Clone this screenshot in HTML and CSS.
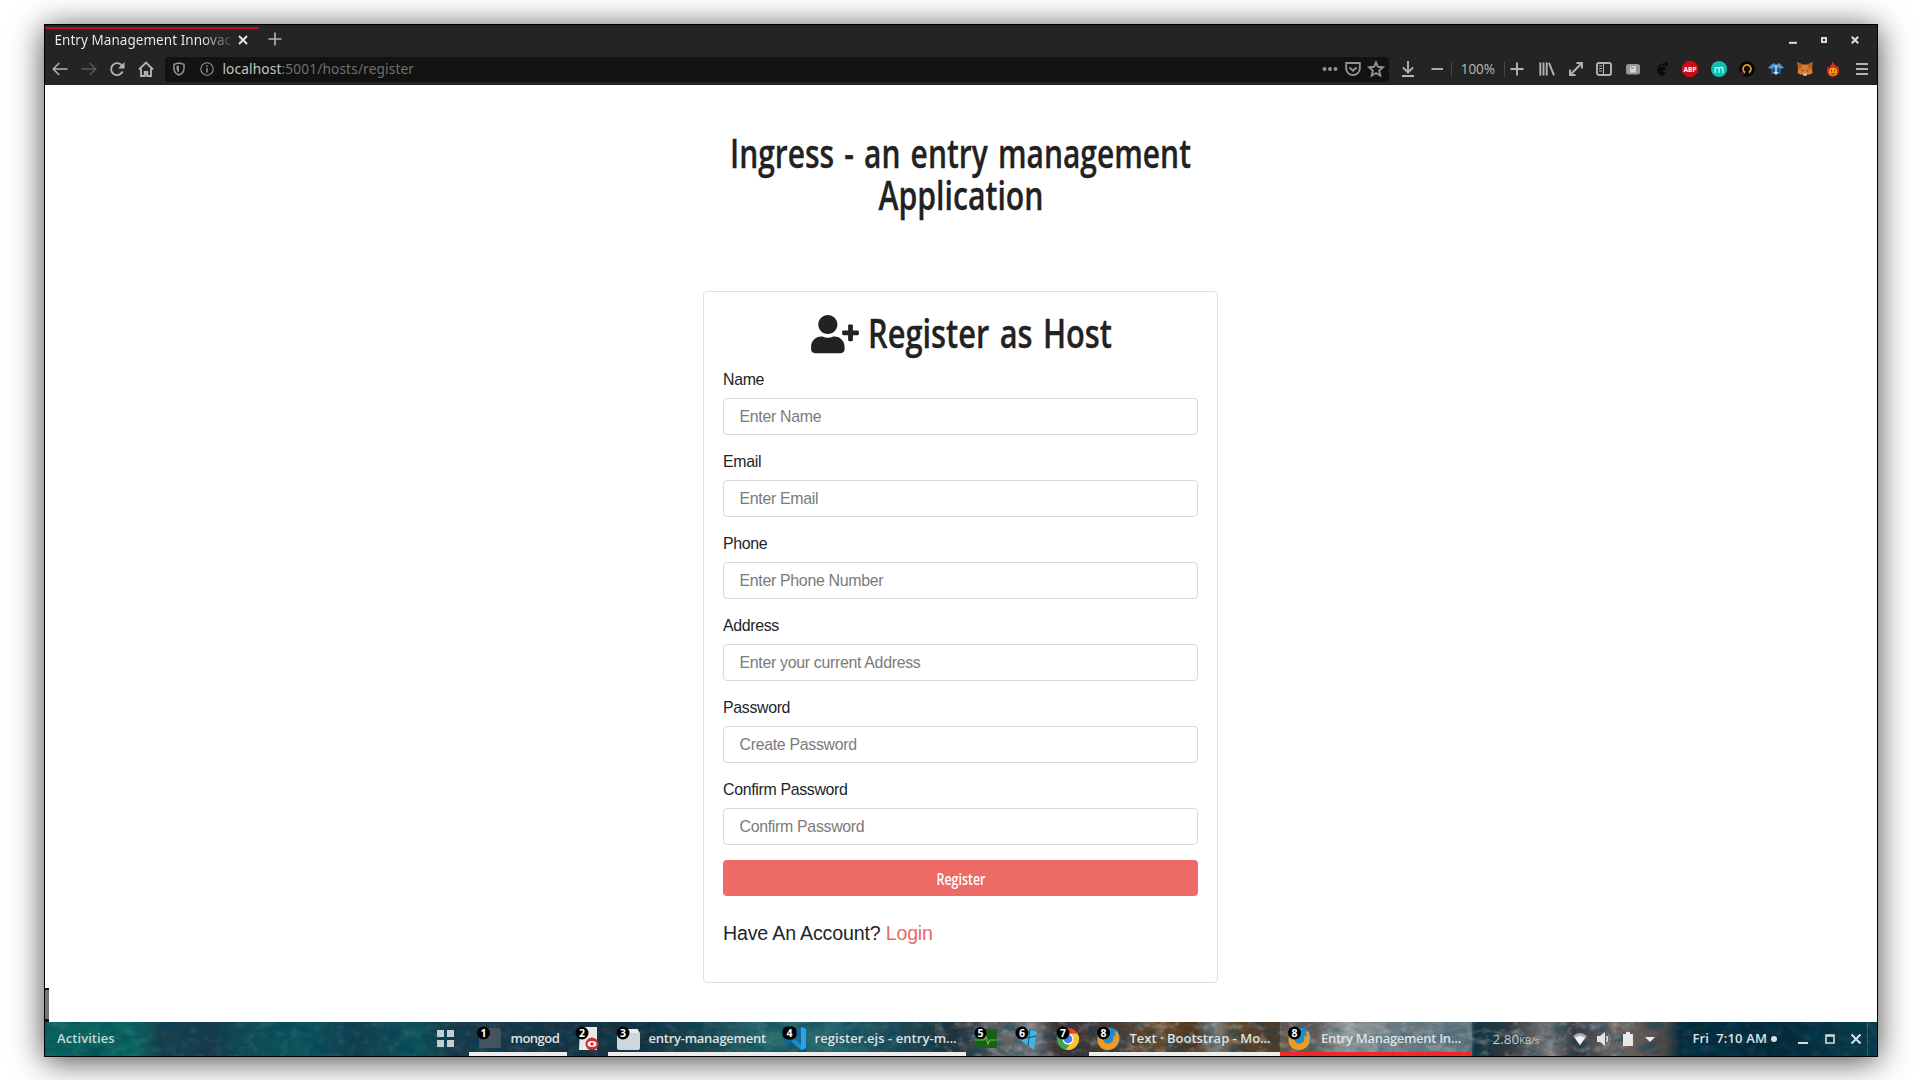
FILE: index.html
```html
<!DOCTYPE html>
<html lang="en">
<head>
<meta charset="utf-8">
<title>Entry Management Innovaccer</title>
<link rel="stylesheet" href="styles.css">
</head>
<body>
<div class="window">
  <header class="titlebar">
    <div class="tab">
      <span class="tab-title">Entry Management Innovac</span>
      <svg class="tab-close" width="10" height="10" viewBox="0 0 10 10"><path d="M1 1l8 8M9 1l-8 8" stroke="#eee" stroke-width="1.8"/></svg>
    </div>
    <svg class="new-tab" width="14" height="14" viewBox="0 0 14 14"><path d="M7 .5v13M.5 7h13" stroke="#b4b4b4" stroke-width="1.6"/></svg>
    <div class="window-controls">
      <svg width="8" height="8" viewBox="0 0 8 8"><path d="M0 6.8h8" stroke="#ddd" stroke-width="2"/></svg>
      <svg width="8" height="8" viewBox="0 0 8 8"><path d="M2 2h4v4H2z" fill="none" stroke="#ddd" stroke-width="2"/></svg>
      <svg width="8" height="8" viewBox="0 0 8 8"><path d="M.8.8l6.400 6.400M7.200.8L.8 7.200" stroke="#ddd" stroke-width="2"/></svg>
    </div>
  </header>

  <nav class="toolbar">
    <span class="tool"><svg viewBox="0 0 16 16"><path d="M15.500 8H1.500M7.200 2L1.200 8l6 6" class="line"/></svg></span>
    <span class="tool dim"><svg viewBox="0 0 16 16"><path d="M.5 8h14M8.800 2l6 6-6 6" class="line"/></svg></span>
    <span class="tool"><svg viewBox="0 0 16 16"><path d="M13.600 10.500A6 6 0 1 1 12.500 4" class="line bold"/><path d="M15.500 1v6.500H9z" class="solid"/></svg></span>
    <span class="tool"><svg viewBox="0 0 16 16"><path d="M1 8.500L8 1.500l7 7M3 7.500V15h3.700v-4h2.600v4H13V7.500" class="line bold"/><path d="M8 11v4" class="line"/></svg></span>
    <div class="urlbar">
      <svg class="shield" width="12" height="14" viewBox="0 0 12 14"><path d="M6 1l5 1.300v4C11 9.500 9 12 6 13 3 12 1 9.500 1 6.300v-4z" class="line"/><path d="M6 3.500v7C4.300 9.500 3.500 8 3.500 6V4z" class="solid"/></svg>
      <svg class="info" width="14" height="14" viewBox="0 0 14 14"><circle cx="7" cy="7" r="6.200" class="line thin"/><path d="M7 6v4.500M7 3.300v1.500" class="line"/></svg>
      <span class="url"><b>localhost</b>:5001/hosts/register</span>
      <span class="url-action"><svg viewBox="0 0 16 16"><circle cx="2.500" cy="8" r="2" class="solid"/><circle cx="8" cy="8" r="2" class="solid"/><circle cx="13.500" cy="8" r="2" class="solid"/></svg></span>
      <span class="url-action"><svg viewBox="0 0 16 16"><path d="M1.200 2h13.600v5.500a6.800 6.500 0 0 1-13.600 0z" class="line bold"/><path d="M4.500 6.500L8 9.800l3.500-3.300" class="line bold"/></svg></span>
      <span class="url-action"><svg viewBox="0 0 16 16"><path d="M8 1.300l2 4.500 4.900.5-3.700 3.300 1.100 4.900L8 12l-4.300 2.500 1.100-4.900L1.100 6.300 6 5.800z" class="line bold"/></svg></span>
    </div>
    <span class="tool download"><svg viewBox="0 0 16 16"><path d="M8 0v11M3 6.500l5 5 5-5M2 15h12" class="line bold"/></svg></span>
    <span class="tool"><svg viewBox="0 0 16 16"><path d="M2.500 8h11.500" class="line bold"/></svg></span>
    <span class="zoom-level">100%</span>
    <span class="tool plus"><svg viewBox="0 0 16 16"><path d="M8 1.500v13M1.500 8h13" class="line bold"/></svg></span>
    <div class="extensions">
      <span class="tool"><svg viewBox="0 0 16 16"><path d="M1.300 1.500v13M4.500 1.500v13M7.700 1.500v13M10 1.800l5 12.500" class="line bold"/></svg></span>
      <span class="tool"><svg viewBox="0 0 16 16"><path d="M3 13L13 3M8.500 2H14v5.500M2 8.500V14h5.500" class="line bold"/></svg></span>
      <span class="tool"><svg viewBox="0 0 16 16"><rect x="1" y="2" width="14" height="12" rx="2" class="line bold"/><path d="M7.500 2v12M3 5h3M3 7.500h3M3 10h3" class="line thin"/></svg></span>
      <span class="tool"><svg viewBox="0 0 16 16"><rect x="1" y="3" width="14" height="10.500" rx="2.500" fill="#969696"/><path d="M5 5h6v6.500H5z" fill="#d4d4d4"/><path d="M6 5.500l1 2 2-1" stroke="#888" fill="none"/></svg></span>
      <span class="tool"><svg viewBox="0 0 16 16"><path d="M3.500 7.500C5 5 11 5 11.500 7c.5 2-3 2-2.500 3.500.4 1 1.500 0 2 .8.500 1-1 3.500-3.300 3.300C5 14.400 2.500 10 3.500 7.500z" fill="#090909"/><ellipse cx="12" cy="3" rx="1.600" ry="2.300" fill="#090909"/><circle cx="8.800" cy="3.500" r="1.200" fill="#090909"/><circle cx="6.200" cy="4.300" r="1" fill="#090909"/><circle cx="4" cy="5.600" r=".9" fill="#090909"/></svg></span>
      <span class="tool"><svg viewBox="0 0 16 16"><path d="M4.700 0h6.600L16 4.700v6.600L11.300 16H4.700L0 11.300V4.700z" fill="#c90d12"/><text x="8" y="10.600" class="abp">ABP</text></svg></span>
      <span class="tool"><svg viewBox="0 0 16 16"><circle cx="8" cy="8" r="8" fill="#0fbfb0"/><text x="8" y="11.500" class="em">m</text></svg></span>
      <span class="tool"><svg viewBox="0 0 16 16"><circle cx="8" cy="8" r="7.800" fill="#050505"/><path d="M6.200 11.700H4.800M11.200 11.700H9.800M6.200 11.500A4 4 0 1 1 9.800 11.500" fill="none" stroke="#e9a21b" stroke-width="1.700"/><path d="M1 12l3-1 1 3z" fill="#6a1b80"/></svg></span>
      <span class="tool"><svg viewBox="0 0 16 16"><path d="M0 7l3-3h10l3 3-3 1v5H3V8z" fill="#22578d"/><path d="M0 7l3-3 3-2 2 2 3-2 2 2 3 3-4 .5L8 6 4 7.500z" fill="#5b98c8"/><path d="M7.200 4h1.600v7H11l-3 3-3-3h2.200z" fill="#b7dcfa"/></svg></span>
      <span class="tool"><svg viewBox="0 0 16 16"><path d="M.5 1l5 2.500h5L15.500 1l-.5 7 .5 4-3 1.800-2-.6L9.500 15h-3l-1-1.800-2 .6L.5 12 1 8z" fill="#df7a26"/><path d="M.5 1l5 2.500L4 7.500H1zM15.500 1l-5 2.500L12 7.500h3z" fill="#b85c20"/><path d="M4 8.500l2.500 1-1 1zM12 8.500l-2.500 1 1 1z" fill="#263b4a"/><path d="M6 12h4l-.5 2.500h-3z" fill="#c7b7a7"/></svg></span>
      <span class="tool"><svg viewBox="0 0 16 16"><path d="M7.500 0c.5 3 3.400 3.500 3.900 6l1.400-1.200C15 9 14.500 15.800 8 15.800S1.300 9.500 3 5.500L4.700 7C5 4.500 7.300 3.500 7.500 0z" fill="#dc2f16"/><circle cx="8" cy="10.600" r="3.900" fill="#f5a31a"/><path d="M6.500 8.800v1.700M9.500 8.800v1.700M6 12c1 1.300 3 1.300 4 0" stroke="#5f2b0c" fill="none"/></svg></span>
      <span class="tool"><svg viewBox="0 0 16 16"><path d="M2 3h12M2 8h12M2 13h12" class="line bold"/></svg></span>
    </div>
  </nav>

  <main class="page">
    <h1 class="app-title">
      <svg width="515" height="84" viewBox="0 0 515 84">
        <text x="27" y="35" textLength="461" lengthAdjust="spacingAndGlyphs">Ingress - an entry management</text>
        <text x="175.500" y="77" textLength="165" lengthAdjust="spacingAndGlyphs">Application</text>
      </svg>
    </h1>
    <section class="card">
      <h1 class="card-title">
        <svg class="user-plus" viewBox="0 0 640 512"><path d="M624 208h-64v-64c0-8.800-7.200-16-16-16h-32c-8.800 0-16 7.200-16 16v64h-64c-8.800 0-16 7.200-16 16v32c0 8.800 7.200 16 16 16h64v64c0 8.800 7.200 16 16 16h32c8.800 0 16-7.200 16-16v-64h64c8.800 0 16-7.200 16-16v-32c0-8.800-7.200-16-16-16zm-400 48c70.700 0 128-57.300 128-128S294.700 0 224 0 96 57.300 96 128s57.300 128 128 128zm89.600 32h-16.700c-22.200 10.200-46.900 16-72.900 16s-50.600-5.800-72.900-16h-16.700C60.200 288 0 348.200 0 422.400V464c0 26.500 21.500 48 48 48h352c26.500 0 48-21.500 48-48v-41.600c0-74.200-60.200-134.400-134.400-134.400z"/></svg>
        <svg width="244" height="48" viewBox="0 0 244 48"><text x="0" y="37" textLength="244" lengthAdjust="spacingAndGlyphs">Register as Host</text></svg>
      </h1>
      <form>
        <div class="group"><label for="name">Name</label><input id="name" type="text" placeholder="Enter Name"></div>
        <div class="group"><label for="email">Email</label><input id="email" type="email" placeholder="Enter Email"></div>
        <div class="group"><label for="phone">Phone</label><input id="phone" type="text" placeholder="Enter Phone Number"></div>
        <div class="group"><label for="address">Address</label><input id="address" type="text" placeholder="Enter your current Address"></div>
        <div class="group"><label for="password">Password</label><input id="password" type="password" placeholder="Create Password"></div>
        <div class="group"><label for="password2">Confirm Password</label><input id="password2" type="password" placeholder="Confirm Password"></div>
        <button type="button"><svg width="49" height="24" viewBox="0 0 49 24"><text x=".5" y="18.500" textLength="49" lengthAdjust="spacingAndGlyphs">Register</text></svg></button>
      </form>
      <p class="lead">Have An Account? <a>Login</a></p>
    </section>
    <div class="edge-handle"></div>
  </main>

  <footer class="taskbar">
    <svg class="texture" width="1832" height="34">
      <filter id="rock" x="0" y="0" width="100%" height="100%">
        <feTurbulence type="fractalNoise" baseFrequency=".09 .13" numOctaves="5" seed="8"/>
        <feColorMatrix values="0 0 0 0 .7  0 0 0 0 .68  0 0 0 0 .66  2.600 0 0 0 -1.250"/>
      </filter>
      <filter id="shade" x="0" y="0" width="100%" height="100%">
        <feTurbulence type="fractalNoise" baseFrequency=".05 .09" numOctaves="5" seed="21"/>
        <feColorMatrix values="0 0 0 0 0  0 0 0 0 .05  0 0 0 0 .1  3 0 0 0 -1.300"/>
      </filter>
      <rect width="1832" height="34" filter="url(#shade)" opacity=".45"/>
      <rect width="890" height="34" filter="url(#rock)" opacity=".1"/>
      <rect x="890" width="700" height="34" filter="url(#rock)" opacity=".35"/>
      <rect x="1590" width="242" height="34" filter="url(#rock)" opacity=".08"/>
    </svg>
    <span class="activities">Activities</span>
    <span class="task"><svg class="grid-icon" width="17" height="17" viewBox="0 0 17 17"><path d="M0 0h7v7H0zM10 0h7v7h-7zM0 10h7v7H0zM10 10h7v7h-7z" fill="#c5cdd2"/></svg></span>
    <span class="task open"><svg width="42" height="34" viewBox="0 0 42 34"><rect x="10" y="6" width="22" height="20" rx="2" fill="#43545f"/><circle cx="14.500" cy="11" r="6.500"/><text x="14.500" y="14.500">1</text></svg><span class="label w-mongod">mongod</span></span>
    <span class="task"><svg width="41" height="34" viewBox="0 0 41 34"><path d="M13 5h17v23H12z" fill="#e9e9e6"/><circle cx="25" cy="22" r="6.500" fill="#d22b30"/><ellipse cx="25" cy="22" rx="4.500" ry="3" fill="#fff"/><circle cx="25" cy="22" r="1.700" fill="#d22b30"/><circle cx="15" cy="11" r="6.500"/><text x="15" y="14.500">2</text></svg></span>
    <span class="task open"><svg width="41" height="34" viewBox="0 0 41 34"><path d="M9 12h12l2-4h7l2 3v15q0 2-2 2H11q-2 0-2-2z" fill="#cfd6de"/><path d="M17 7h13v4H17z" fill="#e9edf0"/><circle cx="15" cy="11" r="6.500"/><text x="15" y="14.500">3</text></svg><span class="label w-entry">entry-management</span></span>
    <span class="task open"><svg width="40" height="34" viewBox="0 0 40 34"><path d="M26 5l5 2v19l-5 2L9 13l3-2 14 11z" fill="#168bd8"/><path d="M26 5v7L12 23l-3-2z" fill="#0868ae"/><path d="M26 5l5 2v19l-5 2z" fill="#27a4ef"/><rect x="7.500" y="4.500" width="14" height="13" rx="5"/><text x="14.500" y="14.500">4</text></svg><span class="label w-register">register.ejs - entry-m…</span></span>
    <span class="task"><svg width="47" height="34" viewBox="0 0 47 34"><rect x="9" y="7" width="22" height="19" fill="#17601b"/><path d="M9 18h9l2-3 2 7 2-4h7" fill="none" stroke="#65bd50" stroke-width="1.200"/><circle cx="14.500" cy="11" r="6"/><text x="14.500" y="14.500">5</text></svg></span>
    <span class="task"><svg width="38" height="34" viewBox="0 0 38 34"><path d="M14 6.500l10 3.500-3.500 18L7 17.500z" fill="#42b5e8"/><path d="M8 17l15.500-3M17 7l-2 17" stroke="#163342" stroke-width=".8"/><circle cx="9" cy="11" r="6.500"/><text x="9" y="14.500">6</text></svg></span>
    <span class="task"><svg width="38" height="34" viewBox="0 0 38 34"><circle cx="17" cy="17" r="11" fill="#e74133"/><path d="M7.500 11.500A11 11 0 0 0 15 27.800L21 19l-4-2z" fill="#39a852"/><path d="M17 11.500h9.500A11 11 0 0 1 15 27.800L22 17z" fill="#f9c629"/><circle cx="17" cy="17" r="5.500" fill="#fff"/><circle cx="17" cy="17" r="4.300" fill="#4281ed"/><circle cx="12" cy="11" r="6.500"/><text x="12" y="14.500">7</text></svg></span>
    <span class="task open"><svg width="41" height="34" viewBox="0 0 41 34"><circle cx="20" cy="16.500" r="11" fill="#2389cd"/><path d="M9 14c2-1 5-1 7 1l-2 2c1 5 6 6 9 3 2-2 1-5 2-7l2 2-1-5 2-1c5 9 0 19-9 19S7 20 9 14z" fill="#f29a1f"/><circle cx="14.500" cy="11" r="6.500"/><text x="14.500" y="14.500">8</text></svg><span class="label w-text">Text · Bootstrap - Mo…</span></span>
    <span class="task active"><svg width="41" height="34" viewBox="0 0 41 34"><circle cx="20" cy="16.500" r="11" fill="#2389cd"/><path d="M9 14c2-1 5-1 7 1l-2 2c1 5 6 6 9 3 2-2 1-5 2-7l2 2-1-5 2-1c5 9 0 19-9 19S7 20 9 14z" fill="#f29a1f"/><circle cx="14.500" cy="11" r="6.500"/><text x="14.500" y="14.500">8</text></svg><span class="label w-text tight">Entry Management In…</span></span>
    <span class="speed">2.80<small>KB/s</small></span>
    <div class="tray">
      <svg width="14" height="16" viewBox="0 0 14 16"><path d="M0 5q7-6 14 0L7 14z" fill="#aaa"/><path d="M2 7q5-4 10 0l-5 7z" fill="#f2f2f2"/></svg>
      <svg width="14" height="16" viewBox="0 0 14 16"><path d="M0 5h3l5-4v14l-5-4H0z" fill="#e4e4e4"/><path d="M9.500 5q2 3 0 6" stroke="#e4e4e4" stroke-width="1.500" fill="none"/><path d="M11 3q4 5 0 10" stroke="#999" fill="none"/></svg>
      <svg width="10" height="16" viewBox="0 0 10 16"><path d="M3 1h4v2h3v12H0V3h3z" fill="#e8e8e8"/></svg>
      <svg width="10" height="16" viewBox="0 0 10 16"><path d="M0 6h10l-5 5z" fill="#ececec"/></svg>
    </div>
    <span class="clock">Fri&nbsp; 7:10 AM</span>
    <i class="dot"></i>
    <div class="desk-controls">
      <svg width="10" height="10" viewBox="0 0 10 10"><path d="M0 9h10" stroke="#d5dadd" stroke-width="2"/></svg>
      <svg width="10" height="10" viewBox="0 0 10 10"><path d="M1 1h8v8H1zM1 2h8" fill="none" stroke="#d5dadd" stroke-width="1.600"/></svg>
      <svg width="10" height="10" viewBox="0 0 10 10"><path d="M.5.5l9 9M9.500.5l-9 9" stroke="#d5dadd" stroke-width="2.200"/></svg>
    </div>
    <i class="panel-end"></i>
  </footer>
</div>
</body>
</html>
```
FILE: styles.css
```css
* { box-sizing: border-box; }
html { font-size: 15.27px; }
body {
  margin: 0;
  width: 1920px;
  height: 1080px;
  overflow: hidden;
  padding: 24px 0 0 44px;
  background: #fff;
  color: #212529;
  font-family: "Liberation Sans", Arial, sans-serif;
}
svg { display: block; flex: none; overflow: visible; }

.window {
  width: 1834px;
  height: 1033px;
  border: 1px solid #000;
  background: #fff;
  box-shadow: 0 4px 30px rgba(0, 0, 0, .72);
  display: flex;
  flex-direction: column;
}

/* browser chrome */
.titlebar {
  height: 28px;
  background: #242424;
  display: flex;
  align-items: center;
  font-family: "Noto Sans", sans-serif;
}
.tab {
  width: 214px;
  height: 26px;
  margin-top: 2px;
  border-top: 2px solid #b90f2c;
  padding-left: 9.500px;
  display: flex;
  align-items: center;
}
.tab-title {
  width: 179px;
  font-size: 13.500px;
  letter-spacing: .05px;
  line-height: 20px;
  margin-top: -2px;
  white-space: nowrap;
  overflow: hidden;
  background: linear-gradient(90deg, #f2f2f2 145px, #333 179px);
  background-clip: text;
  -webkit-background-clip: text;
  color: transparent;
}
.tab-close { margin: -2px 0 0 4.500px; }
.new-tab { margin-left: 8.500px; }
.window-controls { margin-left: auto; padding-right: 18.500px; display: flex; gap: 23px; margin-top: 2px; }

.toolbar {
  height: 32px;
  background: #242424;
  display: flex;
  align-items: center;
  padding-left: 1px;
  color: #b3b3b3;
  font-family: "Noto Sans", sans-serif;
}
.tool { width: 28.600px; display: flex; justify-content: center; flex: none; }
.tool svg, .url-action svg { width: 16px; height: 16px; }
.dim { color: #5a5a5a; }
.line { fill: none; stroke: currentColor; stroke-width: 1.500; }
.line.bold { stroke-width: 1.900; }
.line.thin { stroke-width: 1.100; }
.solid { fill: currentColor; }
.urlbar {
  flex: 1;
  height: 25px;
  margin-left: 5px;
  border-radius: 3px;
  background: #121212;
  display: flex;
  align-items: center;
  padding-right: 1px;
  color: #929292;
}
.shield { margin-left: 8px; }
.info { margin-left: 15px; }
.url { margin: -1px 0 0 8px; font-size: 13.700px; letter-spacing: .14px; line-height: 20px; color: #707070; flex: 1; }
.url b { font-weight: 400; color: #c4c4c4; }
.url-action { width: 23px; display: flex; justify-content: center; }
.download { margin-left: 5px; }
.zoom-level {
  width: 54px;
  height: 15px;
  line-height: 14px;
  border: solid #484848;
  border-width: 0 1px;
  text-align: center;
  font-size: 13.500px;
}
.plus { width: 25px; }
.extensions { display: flex; margin-left: 3px; padding-right: 1px; }
.abp { font: bold 6.500px "Noto Sans", sans-serif; fill: #fff; text-anchor: middle; }
.em { font: 11px "Noto Sans", sans-serif; fill: #e5fffc; text-anchor: middle; }

/* registration page */
.page {
  height: 937px;
  position: relative;
  display: flex;
  flex-direction: column;
  align-items: center;
  padding-right: 1px;
}
.app-title { margin: 48px 0 74px; }
.app-title text, .card-title text {
  font: 600 38.800px "Open Sans", sans-serif;
  word-spacing: 3px;
  fill: #222;
  stroke: #222;
  stroke-width: .3px;
}
.card {
  width: 515px;
  height: 692px;
  border: 1px solid #dfdfdf;
  border-radius: 4px;
  padding: 19px;
}
.card-title {
  display: flex;
  justify-content: center;
  align-items: flex-start;
  gap: 9px;
  margin: 0;
  padding-left: 2px;
  height: 57px;
}
.user-plus { width: 48px; height: 38.200px; margin-top: 3.500px; fill: #222; }
.group { margin-bottom: 1rem; height: 66.730px; }
label {
  display: block;
  height: 22.900px;
  line-height: 24px;
  margin-bottom: 7.500px;
  font-size: 15.900px;
  letter-spacing: -.33px;
}
input {
  display: block;
  width: 100%;
  height: 36.300px;
  border: 1px solid #d5dae0;
  border-radius: 4px;
  padding: 1.500px 15.500px 0;
  font: 15.900px "Liberation Sans", Arial, sans-serif;
  letter-spacing: -.31px;
}
input::placeholder { color: #7b7b7b; }
button {
  display: flex;
  width: 100%;
  height: 36.300px;
  padding: 0;
  border: 0;
  border-radius: 4px;
  background: #ed6a66;
  align-items: center;
  justify-content: center;
}
button text { font: 600 16px "Open Sans", sans-serif; fill: #fff; }
.lead { margin: 1.500rem 0 1rem; font-size: 19.600px; letter-spacing: -.17px; line-height: 29.500px; }
.lead a { color: #ed6a66; }
.edge-handle {
  position: absolute;
  left: 0;
  bottom: 0;
  width: 4px;
  height: 34px;
  background: #757575;
  border: solid #111;
  border-width: 2px 0 3px;
}

/* desktop panel */
.taskbar {
  height: 34px;
  position: relative;
  display: flex;
  color: #dde3e5;
  font: 600 13px "Open Sans", sans-serif;
  background: linear-gradient(90deg, #08625b 0, #0b6760 90px, #17414c 115px, #183a4a 165px, #104d53 200px, #0a545b 260px, #143e4e 310px, #0c5358 370px, #18394a 410px, #183444 500px, #17303e 600px, #1d4b55 670px, #2b6d6d 720px, #23636b 790px, #1d4b58 850px, #233038 910px, #5e605f 955px, #777 990px, #3b3434 1010px, #463936 1070px, #6a4c2b 1115px, #493521 1150px, #7e7c78 1170px, #5b4328 1195px, #4b3b2c 1234px, #4a4138 1270px, #8c9496 1300px, #5c6b73 1350px, #49616d 1425px, #17313e 1430px, #343a3d 1465px, #777 1505px, #35383f 1530px, #6f6765 1570px, #514744 1620px, #062b3b 1635px, #042a3a 1740px, #083a49 1832px);
}
.texture { position: absolute; left: 0; top: 0; }
.activities, .task, .speed, .tray, .clock, .dot, .desk-controls { position: relative; }
.activities { width: 374.500px; padding-left: 12px; line-height: 33px; font-size: 13px; letter-spacing: .08px; color: #c5d8d6; }
.grid-icon { margin: 8px 15px 0 17px; }
.task { display: flex; flex: none; line-height: 33px; }
.task text { font: bold 10.500px "Open Sans", sans-serif; fill: #fff; text-anchor: middle; }
.open { box-shadow: inset 0 -4px #eeecea; }
.active { background: rgba(190, 195, 195, .2); box-shadow: inset 0 -4px #ed2929; }
.label { white-space: nowrap; }
.w-mongod { width: 56px; letter-spacing: -.5px; }
.w-entry { width: 126px; letter-spacing: -.25px; }
.w-register { width: 151px; letter-spacing: .05px; }
.w-text { width: 150.500px; }
.tight { letter-spacing: -.3px; }
.speed { margin-left: 21px; width: 80px; line-height: 35px; font-weight: 400; color: #ccc; font-size: 13.500px; }
.speed small { font-size: 9.500px; }
.tray { display: flex; align-items: center; width: 120px; }
.tray svg:nth-child(2) { margin-left: 10px; }
.tray svg:nth-child(3) { margin-left: 12px; }
.tray svg:nth-child(4) { margin-left: 12px; }
.clock { line-height: 33px; width: 78px; font-size: 13px; letter-spacing: .15px; white-space: nowrap; }
.dot { width: 6px; height: 6px; margin: 14px 0 0; border-radius: 50%; background: #dce0e2; }
.desk-controls { margin-left: auto; padding: 12px 6px 0 0; display: flex; gap: 16.500px; }
.panel-end { width: 10px; border-left: 1px solid rgba(255, 255, 255, .2); }
```
